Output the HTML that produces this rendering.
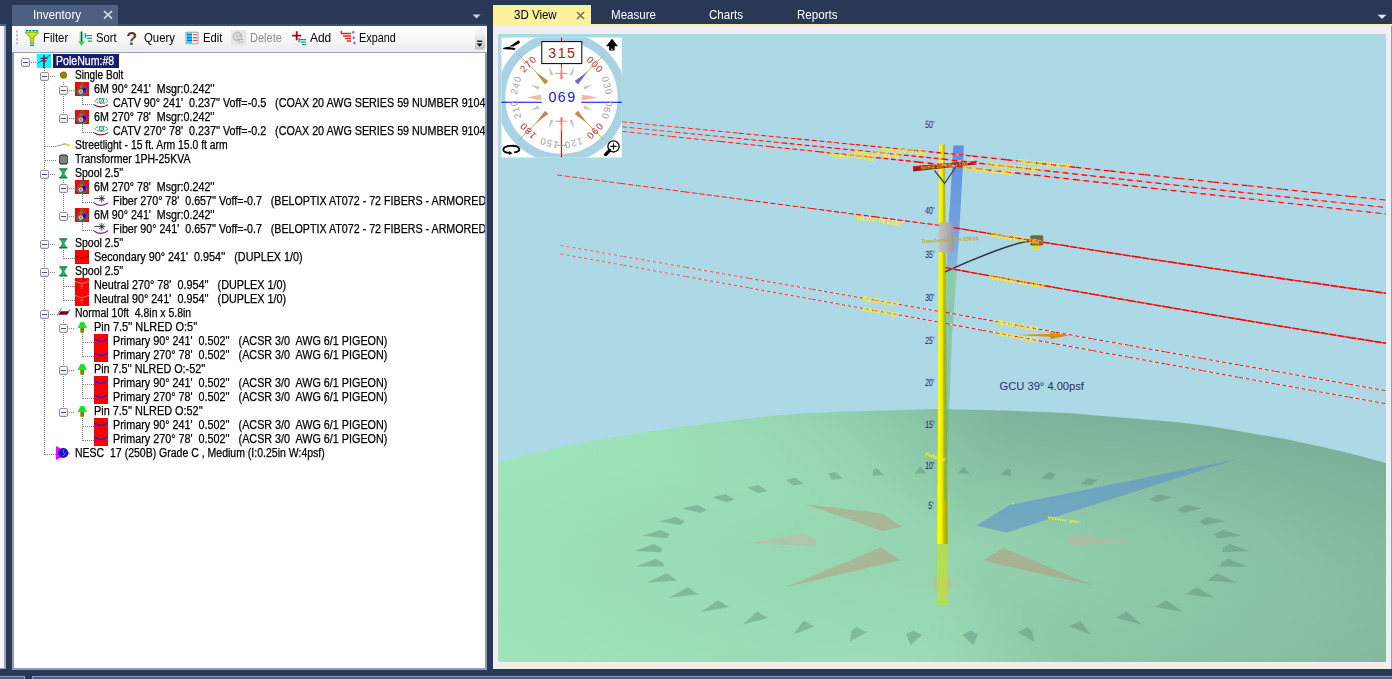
<!DOCTYPE html><html><head><meta charset="utf-8"><title>Inventory 3D View</title><style>
html,body{margin:0;padding:0}
body{width:1392px;height:679px;overflow:hidden;background:#293955;position:relative;font-family:"Liberation Sans",sans-serif}
.abs{position:absolute}
#lp{left:0;top:26px;width:4px;height:642px;background:#f5f5f8;border-right:2px solid #9aa6c4;border-bottom:1px solid #9aa6c4}
#lpt{left:0;top:24px;width:6px;height:2px;background:#4d6082}
#invtab{left:12px;top:5px;width:106px;height:21px;background:#4d6082;color:#fff;font-size:12px}
#invtab span{position:absolute;left:21px;top:3px;transform-origin:0 50%;transform:scaleX(0.975)}
#inv{left:12px;top:26px;width:475px;height:644px;background:#fff}
#tb{left:0;top:0;width:475px;height:26px;background:linear-gradient(#ffffff,#f6f6f6 55%,#ebebec);border-radius:0 0 3px 0}
#tbl{left:12px;top:24px;width:475px;height:2px;background:#3c4f76}
#tree{left:0;top:26px;width:471px;height:615px;border:2px solid #8e9bbc;border-top:1px solid #9aa3b5;background:#fff;overflow:hidden}
.tl{position:absolute;font-size:12px;color:#000;top:5px;white-space:nowrap}
.row{position:absolute;left:0;height:14px;white-space:nowrap;font-size:13px;line-height:14px;color:#000}
.t{position:absolute;display:inline-block;height:14px;line-height:14px;font-size:12px;color:#000;-webkit-text-stroke:0.25px currentColor;transform-origin:0 50%;transform:scaleX(0.89);white-space:pre}
#bot1{left:0;top:676px;width:24px;height:3px;background:#4d6082;border-top:1px solid #8e9bbc;border-right:1px solid #8e9bbc}
#bot2{left:32px;top:676px;width:1360px;height:3px;background:#4d6082;border-top:1px solid #8e9bbc;border-left:1px solid #8e9bbc}
#v3tab{left:493px;top:5px;width:98px;height:21px;background:#fff29d;color:#000;font-size:12px}
.ttab{position:absolute;top:8px;color:#fff;font-size:12px;transform-origin:0 50%;transform:scaleX(0.965)}
#yl{left:493px;top:24px;width:899px;height:2px;background:#fff29d}
#vp{left:493px;top:26px;width:898px;height:643px;background:#efeff2}
#vpr{left:1391px;top:26px;width:1px;height:643px;background:#8e9bbc}
#view{left:5px;top:8px;width:888px;height:628px;background:#add8e6;overflow:hidden}
</style></head><body><div id="tbl" class="abs"></div><div id="lpt" class="abs"></div><div id="lp" class="abs"></div><div id="invtab" class="abs"><span>Inventory</span><svg class="abs" style="left:90.5px;top:4.6px" width="10" height="10"><path d="M1 1L9 8.6M9 1L1 8.6" stroke="#d6dbe6" stroke-width="1.6" fill="none"/></svg></div><svg class="abs" style="left:472px;top:14px" width="10" height="6"><path d="M0.5 0.5H8.5L4.5 4.5Z" fill="#ced4e2"/></svg><svg class="abs" style="left:1377px;top:14px" width="10" height="6"><path d="M0.7 0.7H9.3L5 5Z" fill="#e4e8f0"/></svg><div id="inv" class="abs"><div id="tb" class="abs"><svg class="abs" style="left:0;top:0" width="475" height="26" viewBox="12 26 475 26"><rect x="16" y="30.4" width="2" height="2" fill="#b4b8c0"/><rect x="16" y="34.4" width="2" height="2" fill="#b4b8c0"/><rect x="16" y="38.4" width="2" height="2" fill="#b4b8c0"/><rect x="16" y="42.4" width="2" height="2" fill="#b4b8c0"/><path d="M25.8 30.8H28.2M29 30.8H31.4M32.4 30.8H34.8M35.6 30.8H38" stroke="#008080" stroke-width="1.4"/><path d="M25.3 32.3H38.5L33.6 38V43.6H30.4V38Z" fill="#e4e800" stroke="#58b020" stroke-width="0.8"/><path d="M28 33.5L32 38.5V43M36 33.5L32 38.5" stroke="#5a5ad0" stroke-width="0.7" stroke-dasharray="1 1" fill="none"/><path d="M30 45.2H34" stroke="#008080" stroke-width="1.2"/><path d="M81.5 31.5V44" stroke="#2a2ac8" stroke-width="1.1"/><path d="M80.2 31.5V41M82.8 31.5V41" stroke="#30e030" stroke-width="0.9"/><path d="M78.2 41.3H84.8L81.5 45.8Z" fill="#22e022"/><path d="M85.3 33V38.2M85.3 35.6H92M86.8 38.3H92M88 41.2H92" stroke="#1f9a8a" stroke-width="1.2" fill="none"/><rect x="186" y="32.2" width="12" height="11.6" fill="#fff" stroke="#8a8a8a" stroke-width="0.8"/><rect x="186.6" y="32.8" width="5.4" height="10.4" fill="#10e4f4"/><path d="M187 34.8H192M187 37.6H192M187 40.4H192" stroke="#2050e0" stroke-width="1.1"/><path d="M193 34.8H197.4M193 37.6H197.4M193 40.4H197.4" stroke="#f04040" stroke-width="1.1"/><rect x="231" y="30" width="15.5" height="15.5" fill="#e6e6e6"/><circle cx="237.5" cy="36.5" r="4.3" fill="#dcdcdc" stroke="#b4b4b4" stroke-width="1"/><path d="M236 36H241L240 33.5M236.5 39.5H243.5M238 42H243.5" stroke="#b0b0b0" stroke-width="0.9" fill="none"/><path d="M296.7 31.3V40.2M292.2 35.7H301.3" stroke="#b00020" stroke-width="1.8"/><path d="M299 38V42.2M299 39.6H306M300.6 42.2H306M302 44.7H306" stroke="#1f9a8a" stroke-width="1.2" fill="none"/><path d="M341.3 30.8V34M341 33.5H351M343 36H351M345 38.5H351M347 41H351" stroke="#f02020" stroke-width="1.3" fill="none"/><path d="M351.8 32.2H354.6M353.2 30.8V33.6M352.3 37.8H355.1M353.7 36.4V39.2M353 43H355.8M354.4 41.6V44.4" stroke="#4a4af0" stroke-width="0.8"/><defs><linearGradient id="ovg" x1="0" y1="0" x2="0" y2="1"><stop offset="0" stop-color="#fbfbfb"/><stop offset="0.35" stop-color="#f0f0f0"/><stop offset="0.7" stop-color="#d8d8d8"/><stop offset="1" stop-color="#bcbcbe"/></linearGradient></defs><path d="M475 27H485.4V47.4L483 49.6H475Z" fill="url(#ovg)"/><path d="M477 41.2H482.2" stroke="#000" stroke-width="1.2"/><path d="M476.8 43.4H482.4L479.6 46.8Z" fill="#000"/></svg><span class="abs" style="left:114.3px;top:3.5px;font:bold 18px 'Liberation Sans',sans-serif;line-height:18px;color:#3c2a44;background:linear-gradient(#5a1a2a,#5a5a20 45%,#1a6a6a 70%,#5a2a8a);-webkit-background-clip:text;background-clip:text;-webkit-text-fill-color:transparent">?</span><span class="tl" style="left:31.2px;color:#000;transform-origin:0 50%;transform:scaleX(0.9448)">Filter</span><span class="tl" style="left:83.5px;color:#000;transform-origin:0 50%;transform:scaleX(0.9402)">Sort</span><span class="tl" style="left:132.1px;color:#000;transform-origin:0 50%;transform:scaleX(0.9484)">Query</span><span class="tl" style="left:191.1px;color:#000;transform-origin:0 50%;transform:scaleX(0.9378)">Edit</span><span class="tl" style="left:238.4px;color:#8d8d8d;transform-origin:0 50%;transform:scaleX(0.9196)">Delete</span><span class="tl" style="left:297.8px;color:#000;transform-origin:0 50%;transform:scaleX(0.9925)">Add</span><span class="tl" style="left:347.2px;color:#000;transform-origin:0 50%;transform:scaleX(0.9017)">Expand</span></div><div id="tree" class="abs"><svg class="abs" style="left:0;top:0" width="471" height="614" viewBox="14 53 471 614" shape-rendering="crispEdges"><defs><linearGradient id="bxg" x1="0" y1="0" x2="0" y2="1"><stop offset="0.5" stop-color="#fff"/><stop offset="1" stop-color="#dcdcdc"/></linearGradient></defs><path d="M44.5 68.0 V454.5 M30.5 62.5 H37.0 M63.5 82.0 V118.5 M49.5 76.5 H56.0 M82.5 96.0 V104.5 M68.5 90.5 H75.0 M82.5 104.5 H94.0 M82.5 124.0 V132.5 M68.5 118.5 H75.0 M82.5 132.5 H94.0 M44.5 146.5 H56.0 M44.5 160.5 H56.0 M63.5 180.0 V216.5 M49.5 174.5 H56.0 M82.5 194.0 V202.5 M68.5 188.5 H75.0 M82.5 202.5 H94.0 M82.5 222.0 V230.5 M68.5 216.5 H75.0 M82.5 230.5 H94.0 M63.5 250.0 V258.5 M49.5 244.5 H56.0 M63.5 258.5 H75.0 M63.5 278.0 V300.5 M49.5 272.5 H56.0 M63.5 286.5 H75.0 M63.5 300.5 H75.0 M63.5 320.0 V412.5 M49.5 314.5 H56.0 M82.5 334.0 V356.5 M68.5 328.5 H75.0 M82.5 342.5 H94.0 M82.5 356.5 H94.0 M82.5 376.0 V398.5 M68.5 370.5 H75.0 M82.5 384.5 H94.0 M82.5 398.5 H94.0 M82.5 418.0 V440.5 M68.5 412.5 H75.0 M82.5 426.5 H94.0 M82.5 440.5 H94.0 M44.5 454.5 H56.0" stroke="#808080" stroke-width="1" stroke-dasharray="1 1" fill="none"/><rect x="21.0" y="58.0" width="8" height="8" rx="1.3" fill="url(#bxg)" stroke="#8f8f8f" stroke-width="1" transform="translate(0.5 0.5)" shape-rendering="auto"/><rect x="23.0" y="62.0" width="5" height="1" fill="#3a4c9a"/><rect x="40.0" y="72.0" width="8" height="8" rx="1.3" fill="url(#bxg)" stroke="#8f8f8f" stroke-width="1" transform="translate(0.5 0.5)" shape-rendering="auto"/><rect x="42.0" y="76.0" width="5" height="1" fill="#3a4c9a"/><rect x="59.0" y="86.0" width="8" height="8" rx="1.3" fill="url(#bxg)" stroke="#8f8f8f" stroke-width="1" transform="translate(0.5 0.5)" shape-rendering="auto"/><rect x="61.0" y="90.0" width="5" height="1" fill="#3a4c9a"/><rect x="59.0" y="114.0" width="8" height="8" rx="1.3" fill="url(#bxg)" stroke="#8f8f8f" stroke-width="1" transform="translate(0.5 0.5)" shape-rendering="auto"/><rect x="61.0" y="118.0" width="5" height="1" fill="#3a4c9a"/><rect x="40.0" y="170.0" width="8" height="8" rx="1.3" fill="url(#bxg)" stroke="#8f8f8f" stroke-width="1" transform="translate(0.5 0.5)" shape-rendering="auto"/><rect x="42.0" y="174.0" width="5" height="1" fill="#3a4c9a"/><rect x="59.0" y="184.0" width="8" height="8" rx="1.3" fill="url(#bxg)" stroke="#8f8f8f" stroke-width="1" transform="translate(0.5 0.5)" shape-rendering="auto"/><rect x="61.0" y="188.0" width="5" height="1" fill="#3a4c9a"/><rect x="59.0" y="212.0" width="8" height="8" rx="1.3" fill="url(#bxg)" stroke="#8f8f8f" stroke-width="1" transform="translate(0.5 0.5)" shape-rendering="auto"/><rect x="61.0" y="216.0" width="5" height="1" fill="#3a4c9a"/><rect x="40.0" y="240.0" width="8" height="8" rx="1.3" fill="url(#bxg)" stroke="#8f8f8f" stroke-width="1" transform="translate(0.5 0.5)" shape-rendering="auto"/><rect x="42.0" y="244.0" width="5" height="1" fill="#3a4c9a"/><rect x="40.0" y="268.0" width="8" height="8" rx="1.3" fill="url(#bxg)" stroke="#8f8f8f" stroke-width="1" transform="translate(0.5 0.5)" shape-rendering="auto"/><rect x="42.0" y="272.0" width="5" height="1" fill="#3a4c9a"/><rect x="40.0" y="310.0" width="8" height="8" rx="1.3" fill="url(#bxg)" stroke="#8f8f8f" stroke-width="1" transform="translate(0.5 0.5)" shape-rendering="auto"/><rect x="42.0" y="314.0" width="5" height="1" fill="#3a4c9a"/><rect x="59.0" y="324.0" width="8" height="8" rx="1.3" fill="url(#bxg)" stroke="#8f8f8f" stroke-width="1" transform="translate(0.5 0.5)" shape-rendering="auto"/><rect x="61.0" y="328.0" width="5" height="1" fill="#3a4c9a"/><rect x="59.0" y="366.0" width="8" height="8" rx="1.3" fill="url(#bxg)" stroke="#8f8f8f" stroke-width="1" transform="translate(0.5 0.5)" shape-rendering="auto"/><rect x="61.0" y="370.0" width="5" height="1" fill="#3a4c9a"/><rect x="59.0" y="408.0" width="8" height="8" rx="1.3" fill="url(#bxg)" stroke="#8f8f8f" stroke-width="1" transform="translate(0.5 0.5)" shape-rendering="auto"/><rect x="61.0" y="412.0" width="5" height="1" fill="#3a4c9a"/></svg><svg class="abs" style="left:23px;top:1px" width="14" height="14" viewBox="0 0 14 14"><rect width="14" height="14" fill="#00ffff"/><path d="M7 1V14" stroke="#8b1a1a" stroke-width="1.7"/><path d="M3.4 4.3H10.6M4.4 6.8H9.6" stroke="#8b1a1a" stroke-width="1.3"/><path d="M0.5 9.5L13.5 0.8" stroke="#2a3ad0" stroke-width="0.8"/></svg><svg class="abs" style="left:42px;top:15px" width="14" height="14" viewBox="0 0 14 14"><circle cx="7.5" cy="7.1" r="3.6" fill="#808000"/><path d="M6.2 5.8h1v1h-1zM8.6 5.8h1v1h-1zM7.4 7.6h1v1h-1zM5.4 8h0.8v0.8h-0.8z" fill="#a8a840"/></svg><svg class="abs" style="left:61px;top:29px" width="14" height="14" viewBox="0 0 14 14"><rect width="14" height="14" fill="#ff0000"/><path d="M7.1 1C6 1 5.6 2 5.4 3C4.4 5 1.9 8.4 2 10.4C2.1 11.8 4.6 12.6 7.1 13.4C9.6 12.6 12.1 11.8 12.2 10.4C12.3 8.4 9.8 5 8.8 3C8.6 2 8.2 1 7.1 1Z" fill="none" stroke="#0e8a80" stroke-width="1.3"/><circle cx="6.4" cy="4.8" r="1.6" fill="#7a8a10"/><circle cx="9.2" cy="7.8" r="2" fill="#0808f0"/><circle cx="5.8" cy="9.6" r="2.4" fill="#c4c4c4"/><circle cx="5.8" cy="9.6" r="1" fill="#2a9a90"/></svg><svg class="abs" style="left:80px;top:43px" width="14" height="14" viewBox="0 0 14 14"><ellipse cx="7.4" cy="4.9" rx="6.4" ry="2.4" fill="none" stroke="#1f9a3a" stroke-width="1" stroke-dasharray="2.2 1"/><circle cx="7.4" cy="4.9" r="2.3" fill="#d8ecf4" stroke="#1f8a7a" stroke-width="0.9"/><path d="M6 6L8.8 3.8M6.6 6.6L9.2 4.6" stroke="#5a8ac0" stroke-width="0.5"/><path d="M0.2 8.6C3.5 11.6 10.5 11.6 14 8.6" fill="none" stroke="#8b1a1a" stroke-width="1.2"/></svg><svg class="abs" style="left:61px;top:57px" width="14" height="14" viewBox="0 0 14 14"><rect width="14" height="14" fill="#ff0000"/><path d="M7.1 1C6 1 5.6 2 5.4 3C4.4 5 1.9 8.4 2 10.4C2.1 11.8 4.6 12.6 7.1 13.4C9.6 12.6 12.1 11.8 12.2 10.4C12.3 8.4 9.8 5 8.8 3C8.6 2 8.2 1 7.1 1Z" fill="none" stroke="#0e8a80" stroke-width="1.3"/><circle cx="6.4" cy="4.8" r="1.6" fill="#7a8a10"/><circle cx="9.2" cy="7.8" r="2" fill="#0808f0"/><circle cx="5.8" cy="9.6" r="2.4" fill="#c4c4c4"/><circle cx="5.8" cy="9.6" r="1" fill="#2a9a90"/></svg><svg class="abs" style="left:80px;top:71px" width="14" height="14" viewBox="0 0 14 14"><ellipse cx="7.4" cy="4.9" rx="6.4" ry="2.4" fill="none" stroke="#1f9a3a" stroke-width="1" stroke-dasharray="2.2 1"/><circle cx="7.4" cy="4.9" r="2.3" fill="#d8ecf4" stroke="#1f8a7a" stroke-width="0.9"/><path d="M6 6L8.8 3.8M6.6 6.6L9.2 4.6" stroke="#5a8ac0" stroke-width="0.5"/><path d="M0.2 8.6C3.5 11.6 10.5 11.6 14 8.6" fill="none" stroke="#8b1a1a" stroke-width="1.2"/></svg><svg class="abs" style="left:42px;top:85px" width="14" height="14" viewBox="0 0 14 14"><path d="M0.5 8.2L7 6.6L9.5 5.6" stroke="#9a9a9a" stroke-width="1.1" fill="none"/><path d="M7 6.3H11" stroke="#b0b0b0" stroke-width="1"/><rect x="10.4" y="6" width="3.4" height="2.6" rx="0.8" fill="#eaea10"/></svg><svg class="abs" style="left:42px;top:99px" width="14" height="14" viewBox="0 0 14 14"><rect x="3.2" y="2.4" width="8.6" height="10.2" rx="2.2" fill="#1a1a1a"/><rect x="4" y="3.6" width="7" height="7.8" rx="1" fill="#808080"/></svg><svg class="abs" style="left:42px;top:113px" width="14" height="14" viewBox="0 0 14 14"><path d="M3.6 3H11L8.3 7.4L11 11.6H3.6L6.3 7.4Z" fill="#18a848"/><path d="M6.3 4.2H8.4L7.4 6.4ZM6 10.6H8.8L7.4 8.4Z" fill="#30c0b0"/><path d="M3.2 2.9H11.4M3.2 11.7H11.4" stroke="#0e7a38" stroke-width="1.4"/></svg><svg class="abs" style="left:61px;top:127px" width="14" height="14" viewBox="0 0 14 14"><rect width="14" height="14" fill="#ff0000"/><path d="M7.1 1C6 1 5.6 2 5.4 3C4.4 5 1.9 8.4 2 10.4C2.1 11.8 4.6 12.6 7.1 13.4C9.6 12.6 12.1 11.8 12.2 10.4C12.3 8.4 9.8 5 8.8 3C8.6 2 8.2 1 7.1 1Z" fill="none" stroke="#0e8a80" stroke-width="1.3"/><circle cx="6.4" cy="4.8" r="1.6" fill="#7a8a10"/><circle cx="9.2" cy="7.8" r="2" fill="#0808f0"/><circle cx="5.8" cy="9.6" r="2.4" fill="#c4c4c4"/><circle cx="5.8" cy="9.6" r="1" fill="#2a9a90"/></svg><svg class="abs" style="left:80px;top:141px" width="14" height="14" viewBox="0 0 14 14"><path d="M0.2 4.6H11.3M7.8 1V8.4M5.2 2L10.4 7.2M10.4 2L5.2 7.2" stroke="#111" stroke-width="0.8" fill="none"/><path d="M0.2 8.8C3.5 12.2 10.5 12.2 14 8.8" fill="none" stroke="#9020a0" stroke-width="1.2"/></svg><svg class="abs" style="left:61px;top:155px" width="14" height="14" viewBox="0 0 14 14"><rect width="14" height="14" fill="#ff0000"/><path d="M7.1 1C6 1 5.6 2 5.4 3C4.4 5 1.9 8.4 2 10.4C2.1 11.8 4.6 12.6 7.1 13.4C9.6 12.6 12.1 11.8 12.2 10.4C12.3 8.4 9.8 5 8.8 3C8.6 2 8.2 1 7.1 1Z" fill="none" stroke="#0e8a80" stroke-width="1.3"/><circle cx="6.4" cy="4.8" r="1.6" fill="#7a8a10"/><circle cx="9.2" cy="7.8" r="2" fill="#0808f0"/><circle cx="5.8" cy="9.6" r="2.4" fill="#c4c4c4"/><circle cx="5.8" cy="9.6" r="1" fill="#2a9a90"/></svg><svg class="abs" style="left:80px;top:169px" width="14" height="14" viewBox="0 0 14 14"><path d="M0.2 4.6H11.3M7.8 1V8.4M5.2 2L10.4 7.2M10.4 2L5.2 7.2" stroke="#111" stroke-width="0.8" fill="none"/><path d="M0.2 8.8C3.5 12.2 10.5 12.2 14 8.8" fill="none" stroke="#9020a0" stroke-width="1.2"/></svg><svg class="abs" style="left:42px;top:183px" width="14" height="14" viewBox="0 0 14 14"><path d="M3.6 3H11L8.3 7.4L11 11.6H3.6L6.3 7.4Z" fill="#18a848"/><path d="M6.3 4.2H8.4L7.4 6.4ZM6 10.6H8.8L7.4 8.4Z" fill="#30c0b0"/><path d="M3.2 2.9H11.4M3.2 11.7H11.4" stroke="#0e7a38" stroke-width="1.4"/></svg><svg class="abs" style="left:61px;top:197px" width="14" height="14" viewBox="0 0 14 14"><rect width="14" height="14" fill="#ff0000"/><path d="M0 5.8C4 8.6 10 8.6 14 5.8" fill="none" stroke="#a00000" stroke-width="1.2"/></svg><svg class="abs" style="left:42px;top:211px" width="14" height="14" viewBox="0 0 14 14"><path d="M3.6 3H11L8.3 7.4L11 11.6H3.6L6.3 7.4Z" fill="#18a848"/><path d="M6.3 4.2H8.4L7.4 6.4ZM6 10.6H8.8L7.4 8.4Z" fill="#30c0b0"/><path d="M3.2 2.9H11.4M3.2 11.7H11.4" stroke="#0e7a38" stroke-width="1.4"/></svg><svg class="abs" style="left:61px;top:225px" width="14" height="14" viewBox="0 0 14 14"><rect width="14" height="14" fill="#ff0000"/><path d="M0 3.4C3 4.2 5 5.4 6.6 5.6C8.5 5.4 11 4.2 14 3.4" fill="none" stroke="#b89080" stroke-width="0.9"/><path d="M6.6 5.6V8.2M4.6 8.2H8.6M5.6 10.2H7.6" fill="none" stroke="#d07060" stroke-width="0.8"/></svg><svg class="abs" style="left:61px;top:239px" width="14" height="14" viewBox="0 0 14 14"><rect width="14" height="14" fill="#ff0000"/><path d="M0 3.4C3 4.2 5 5.4 6.6 5.6C8.5 5.4 11 4.2 14 3.4" fill="none" stroke="#b89080" stroke-width="0.9"/><path d="M6.6 5.6V8.2M4.6 8.2H8.6M5.6 10.2H7.6" fill="none" stroke="#d07060" stroke-width="0.8"/></svg><svg class="abs" style="left:42px;top:253px" width="14" height="14" viewBox="0 0 14 14"><path d="M2.4 8.8L4.6 5.2H13L11 8.8Z" fill="#800000"/><path d="M1 9.6L5.5 2.4M10.8 8.8L14 3.3" stroke="#3030d0" stroke-width="0.8"/></svg><svg class="abs" style="left:61px;top:267px" width="14" height="14" viewBox="0 0 14 14"><path d="M5.6 2.1H9L12 7.9H2.6Z" fill="#10f010"/><path d="M6 4.4H8.6" stroke="#3a8ad0" stroke-width="0.7"/><rect x="5.3" y="7.9" width="3.7" height="4.9" fill="#808000"/></svg><svg class="abs" style="left:80px;top:281px" width="14" height="14" viewBox="0 0 14 14"><rect width="14" height="14" fill="#ff0000"/><path d="M0 5C3.5 7 5.5 7.6 7 7.6S10.5 7 14 5" fill="none" stroke="#2222e0" stroke-width="1.5"/></svg><svg class="abs" style="left:80px;top:295px" width="14" height="14" viewBox="0 0 14 14"><rect width="14" height="14" fill="#ff0000"/><path d="M0 5C3.5 7 5.5 7.6 7 7.6S10.5 7 14 5" fill="none" stroke="#2222e0" stroke-width="1.5"/></svg><svg class="abs" style="left:61px;top:309px" width="14" height="14" viewBox="0 0 14 14"><path d="M5.6 2.1H9L12 7.9H2.6Z" fill="#10f010"/><path d="M6 4.4H8.6" stroke="#3a8ad0" stroke-width="0.7"/><rect x="5.3" y="7.9" width="3.7" height="4.9" fill="#808000"/></svg><svg class="abs" style="left:80px;top:323px" width="14" height="14" viewBox="0 0 14 14"><rect width="14" height="14" fill="#ff0000"/><path d="M0 5C3.5 7 5.5 7.6 7 7.6S10.5 7 14 5" fill="none" stroke="#2222e0" stroke-width="1.5"/></svg><svg class="abs" style="left:80px;top:337px" width="14" height="14" viewBox="0 0 14 14"><rect width="14" height="14" fill="#ff0000"/><path d="M0 5C3.5 7 5.5 7.6 7 7.6S10.5 7 14 5" fill="none" stroke="#2222e0" stroke-width="1.5"/></svg><svg class="abs" style="left:61px;top:351px" width="14" height="14" viewBox="0 0 14 14"><path d="M5.6 2.1H9L12 7.9H2.6Z" fill="#10f010"/><path d="M6 4.4H8.6" stroke="#3a8ad0" stroke-width="0.7"/><rect x="5.3" y="7.9" width="3.7" height="4.9" fill="#808000"/></svg><svg class="abs" style="left:80px;top:365px" width="14" height="14" viewBox="0 0 14 14"><rect width="14" height="14" fill="#ff0000"/><path d="M0 5C3.5 7 5.5 7.6 7 7.6S10.5 7 14 5" fill="none" stroke="#2222e0" stroke-width="1.5"/></svg><svg class="abs" style="left:80px;top:379px" width="14" height="14" viewBox="0 0 14 14"><rect width="14" height="14" fill="#ff0000"/><path d="M0 5C3.5 7 5.5 7.6 7 7.6S10.5 7 14 5" fill="none" stroke="#2222e0" stroke-width="1.5"/></svg><svg class="abs" style="left:42px;top:393px" width="14" height="14" viewBox="0 0 14 14"><path d="M0 0L14 7.3L0 14Z" fill="#ff00ff"/><circle cx="7.3" cy="7" r="5" fill="#1414e8"/><path d="M8 4.2C6.6 4.8 6.8 6 8 6.8S9 9 7.2 9.8" fill="none" stroke="#e0d020" stroke-width="0.8" stroke-dasharray="1.2 0.8"/></svg><div class="abs" style="left:39px;top:1px;width:66px;height:14px;background:#1b1b70"></div><span class="t" style="left:42.4px;top:1px;color:#fff;transform:scaleX(0.8821)">PoleNum:#8</span><span class="t" style="left:61.4px;top:15px;transform:scaleX(0.8426)">Single Bolt</span><span class="t" style="left:80.4px;top:29px;transform:scaleX(0.8915)">6M 90° 241'  Msgr:0.242''</span><span class="t" style="left:99.4px;top:43px;transform:scaleX(0.8956)">CATV 90° 241'  0.237'' Voff=-0.5   (COAX 20 AWG SERIES 59 NUMBER 9104</span><span class="t" style="left:80.4px;top:57px;transform:scaleX(0.8915)">6M 270° 78'  Msgr:0.242''</span><span class="t" style="left:99.4px;top:71px;transform:scaleX(0.8956)">CATV 270° 78'  0.237'' Voff=-0.2   (COAX 20 AWG SERIES 59 NUMBER 9104</span><span class="t" style="left:61.4px;top:85px;transform:scaleX(0.8637)">Streetlight - 15 ft. Arm 15.0 ft arm</span><span class="t" style="left:61.4px;top:99px;transform:scaleX(0.8740)">Transformer 1PH-25KVA</span><span class="t" style="left:61.4px;top:113px;transform:scaleX(0.8742)">Spool 2.5''</span><span class="t" style="left:80.4px;top:127px;transform:scaleX(0.8915)">6M 270° 78'  Msgr:0.242''</span><span class="t" style="left:99.4px;top:141px;transform:scaleX(0.8903)">Fiber 270° 78'  0.657'' Voff=-0.7   (BELOPTIX AT072 - 72 FIBERS - ARMORED</span><span class="t" style="left:80.4px;top:155px;transform:scaleX(0.8915)">6M 90° 241'  Msgr:0.242''</span><span class="t" style="left:99.4px;top:169px;transform:scaleX(0.8903)">Fiber 90° 241'  0.657'' Voff=-0.7   (BELOPTIX AT072 - 72 FIBERS - ARMORED</span><span class="t" style="left:61.4px;top:183px;transform:scaleX(0.8742)">Spool 2.5''</span><span class="t" style="left:80.4px;top:197px;transform:scaleX(0.9003)">Secondary 90° 241'  0.954''   (DUPLEX 1/0)</span><span class="t" style="left:61.4px;top:211px;transform:scaleX(0.8742)">Spool 2.5''</span><span class="t" style="left:80.4px;top:225px;transform:scaleX(0.9017)">Neutral 270° 78'  0.954''   (DUPLEX 1/0)</span><span class="t" style="left:80.4px;top:239px;transform:scaleX(0.9017)">Neutral 90° 241'  0.954''   (DUPLEX 1/0)</span><span class="t" style="left:61.4px;top:253px;transform:scaleX(0.8705)">Normal 10ft  4.8in x 5.8in</span><span class="t" style="left:80.4px;top:267px;transform:scaleX(0.9133)">Pin 7.5'' NLRED O:5''</span><span class="t" style="left:99.4px;top:281px;transform:scaleX(0.8986)">Primary 90° 241'  0.502''   (ACSR 3/0  AWG 6/1 PIGEON)</span><span class="t" style="left:99.4px;top:295px;transform:scaleX(0.8986)">Primary 270° 78'  0.502''   (ACSR 3/0  AWG 6/1 PIGEON)</span><span class="t" style="left:80.4px;top:309px;transform:scaleX(0.8986)">Pin 7.5'' NLRED O:-52''</span><span class="t" style="left:99.4px;top:323px;transform:scaleX(0.8986)">Primary 90° 241'  0.502''   (ACSR 3/0  AWG 6/1 PIGEON)</span><span class="t" style="left:99.4px;top:337px;transform:scaleX(0.8986)">Primary 270° 78'  0.502''   (ACSR 3/0  AWG 6/1 PIGEON)</span><span class="t" style="left:80.4px;top:351px;transform:scaleX(0.9076)">Pin 7.5'' NLRED O:52''</span><span class="t" style="left:99.4px;top:365px;transform:scaleX(0.8986)">Primary 90° 241'  0.502''   (ACSR 3/0  AWG 6/1 PIGEON)</span><span class="t" style="left:99.4px;top:379px;transform:scaleX(0.8986)">Primary 270° 78'  0.502''   (ACSR 3/0  AWG 6/1 PIGEON)</span><span class="t" style="left:61.4px;top:393px;transform:scaleX(0.8756)">NESC  17 (250B) Grade C , Medium (I:0.25in W:4psf)</span></div></div><div id="bot1" class="abs"></div><div id="bot2" class="abs"></div><div id="v3tab" class="abs"><span class="abs" style="left:20.5px;top:3px;transform-origin:0 50%;transform:scaleX(0.96)">3D View</span><svg class="abs" style="left:83px;top:6px" width="10" height="10"><path d="M1 1L8 8M8 1L1 8" stroke="#7d7850" stroke-width="1.7" fill="none"/></svg></div><span class="ttab" style="left:611px">Measure</span><span class="ttab" style="left:709px">Charts</span><span class="ttab" style="left:797px">Reports</span><div id="yl" class="abs"></div><div id="vp" class="abs"><div id="view" class="abs"><div class="abs" style="left:0;top:0;width:888px;height:628px;background:conic-gradient(from 0deg at 445px 509px,#86bea2 0.0deg,#7fb39b 28.0deg,#7db099 52.4deg,#7cae98 85.0deg,#84baa0 130.0deg,#9ce1b8 176.0deg,#9fe5bb 195.0deg,#a1e8bd 258.0deg,#9ee4ba 284.0deg,#95d5b1 310.0deg,#86bea2 360.0deg);clip-path:path('M-10.0 431.0 C-8.3 430.5 -9.5 430.6 0.2 428.2 C9.9 425.8 31.6 420.0 48.4 416.3 C65.2 412.6 83.4 409.0 100.9 405.8 C118.4 402.6 135.8 400.0 153.3 397.4 C170.8 394.8 188.3 392.3 205.8 390.0 C223.3 387.7 244.5 385.4 258.2 383.8 C271.9 382.2 272.2 381.8 288.0 380.7 C303.8 379.6 330.3 378.2 353.0 377.3 C375.7 376.4 408.7 375.8 424.0 375.4 C439.3 375.0 433.1 375.1 445.0 375.2 C456.9 375.3 475.1 375.6 495.4 376.2 C515.6 376.8 548.7 378.1 566.5 379.0 C584.3 379.9 582.1 380.0 602.0 381.7 C621.9 383.4 661.4 386.2 685.9 389.0 C710.4 391.8 729.6 395.2 748.8 398.4 C768.0 401.5 785.6 404.8 801.3 407.9 C817.0 411.0 828.9 413.8 843.2 417.3 C857.5 420.8 878.3 426.5 887.3 428.9 C896.3 431.3 895.4 431.1 897.0 431.5 L897 636 L-10 636 Z')"></div><svg class="abs" style="left:0;top:0" width="888" height="628" viewBox="498 34 888 628"><defs><linearGradient id="gg" gradientUnits="userSpaceOnUse" x1="497" y1="0" x2="1386" y2="0"><stop offset="0" stop-color="#9de2b9"/><stop offset="0.35" stop-color="#98dbb4"/><stop offset="0.6" stop-color="#8ccaa8"/><stop offset="1" stop-color="#83b89e"/></linearGradient><radialGradient id="gd" gradientUnits="userSpaceOnUse" cx="1260" cy="400" r="400" gradientTransform="translate(1260 400) scale(1 0.3) translate(-1260 -400)"><stop offset="0" stop-color="#6f9f8c" stop-opacity="0.55"/><stop offset="1" stop-color="#6f9f8c" stop-opacity="0"/></radialGradient><linearGradient id="pg" x1="0" y1="0" x2="1" y2="0"><stop offset="0" stop-color="#f2f200"/><stop offset="0.2" stop-color="#ffff00"/><stop offset="0.48" stop-color="#ecec00"/><stop offset="0.62" stop-color="#c2c200"/><stop offset="1" stop-color="#9ea200"/></linearGradient><linearGradient id="sg" gradientUnits="userSpaceOnUse" x1="0" y1="145" x2="0" y2="470"><stop offset="0" stop-color="#4f83e0" stop-opacity="0.85"/><stop offset="0.25" stop-color="#6394dc" stop-opacity="0.8"/><stop offset="0.36" stop-color="#78a8dc" stop-opacity="0.75"/><stop offset="0.4" stop-color="#80cc98" stop-opacity="0.75"/><stop offset="0.6" stop-color="#70b070" stop-opacity="0.5"/><stop offset="1" stop-color="#70b070" stop-opacity="0.5"/></linearGradient><radialGradient id="g0" gradientUnits="userSpaceOnUse" cx="943" cy="600" r="644" fx="943" fy="405.8" gradientTransform="translate(943 600) scale(1 0.2935) translate(-943 -600)"><stop offset="0" stop-color="#94d4b0" stop-opacity="1"/><stop offset="1" stop-color="#94d4b0" stop-opacity="0"/></radialGradient></defs><path d="M488.0 465.0 C489.7 464.5 488.5 464.6 498.2 462.2 C507.9 459.8 529.6 454.0 546.4 450.3 C563.2 446.6 581.4 443.0 598.9 439.8 C616.4 436.6 633.8 434.0 651.3 431.4 C668.8 428.8 686.3 426.3 703.8 424.0 C721.3 421.7 742.5 419.4 756.2 417.8 C769.9 416.2 770.2 415.8 786.0 414.7 C801.8 413.6 828.3 412.2 851.0 411.3 C873.7 410.4 906.7 409.8 922.0 409.4 C937.3 409.0 931.1 409.1 943.0 409.2 C954.9 409.3 973.1 409.6 993.4 410.2 C1013.6 410.8 1046.7 412.1 1064.5 413.0 C1082.3 413.9 1080.1 414.0 1100.0 415.7 C1119.9 417.4 1159.4 420.2 1183.9 423.0 C1208.4 425.8 1227.6 429.2 1246.8 432.4 C1266.0 435.5 1283.6 438.8 1299.3 441.9 C1315.0 445.0 1326.9 447.8 1341.2 451.3 C1355.5 454.8 1376.3 460.5 1385.3 462.9 C1394.3 465.3 1393.4 465.1 1395.0 465.5 L1395 670 L488 670 Z" fill="url(#g0)"/><path d="M957.4 473.4 L963.8 466.5 L965.1 467.8 L969.3 473.7Z M999.8 475.0 L1007.1 468.4 L1010.9 469.8 L1011.4 475.8Z M1041.1 478.5 L1049.1 472.1 L1055.4 473.8 L1052.2 479.8Z M1080.3 483.8 L1088.9 477.7 L1097.7 479.7 L1090.8 485.6Z M1149.3 499.6 L1158.5 494.2 L1171.9 497.3 L1157.5 502.3Z M1177.1 509.9 L1186.4 504.8 L1201.7 508.6 L1183.8 513.0Z M1199.1 521.6 L1208.2 516.9 L1225.3 521.5 L1204.1 525.1Z M1214.4 534.5 L1223.1 530.1 L1241.6 535.7 L1217.4 538.2Z M1222.2 548.2 L1230.0 544.1 L1249.5 550.9 L1222.8 552.2Z M1219.7 566.5 L1221.5 562.5 L1228.2 558.7 L1248.1 566.6Z M1207.4 580.8 L1211.8 576.9 L1217.1 573.2 L1236.7 582.4Z M1185.8 594.5 L1196.3 587.3 L1214.9 597.8Z M1155.0 607.0 L1166.1 600.3 L1182.9 612.0Z M1115.8 617.8 L1127.0 611.6 L1141.1 624.4Z M1069.4 626.4 L1080.2 620.7 L1090.9 634.4Z M1017.5 632.2 L1027.5 627.1 L1032.4 630.9 L1034.1 641.4Z M962.3 635.0 L970.9 630.4 L977.8 634.5 L973.2 645.0Z M906.2 634.5 L913.1 630.4 L921.7 635.0 L910.8 645.0Z M849.9 641.4 L851.6 630.9 L856.5 627.1 L866.5 632.2Z M793.1 634.4 L803.8 620.7 L814.6 626.4Z M742.9 624.4 L757.0 611.6 L768.2 617.8Z M701.1 612.0 L717.9 600.3 L729.0 607.0Z M669.1 597.8 L687.7 587.3 L698.2 594.5Z M647.3 582.4 L666.9 573.2 L672.2 576.9 L676.6 580.8Z M635.9 566.6 L655.8 558.7 L662.5 562.5 L664.3 566.5Z M634.5 550.9 L654.0 544.1 L661.8 548.2 L661.2 552.2Z M642.4 535.7 L660.9 530.1 L669.6 534.5 L666.6 538.2Z M658.7 521.5 L675.8 516.9 L684.9 521.6 L679.9 525.1Z M682.3 508.6 L697.6 504.8 L706.9 509.9 L700.2 513.0Z M712.1 497.3 L725.5 494.2 L734.7 499.6 L726.5 502.3Z M747.1 487.6 L758.3 485.1 L767.3 490.9 L757.8 493.1Z M786.3 479.7 L795.1 477.7 L803.7 483.8 L793.2 485.6Z M828.6 473.8 L834.9 472.1 L842.9 478.5 L831.8 479.8Z M872.6 475.8 L873.1 469.8 L876.9 468.4 L884.2 475.0Z M914.7 473.7 L918.9 467.8 L920.2 466.5 L926.6 473.4Z" fill="#5f8a78" fill-opacity="0.42"/><g fill="#c08a70" fill-opacity="0.42"><polygon points="805.6,504.3 882.3,513.4 901.9,527 882.3,531.1"/><polygon points="785.8,587.2 880.6,547.6 900.4,560 893,562"/><polygon points="1092.6,585.2 1003.3,547.9 983.8,560.2 990,562.5"/></g><g fill="#d8a8a0" fill-opacity="0.38"><polygon points="746.5,543.2 804,533.8 816,540 816,546.2"/><polygon points="1134.8,542.3 1075,534.5 1068,540 1070,545.5"/><polygon points="942.5,597 932.5,584 935,576 950,576 952.5,584"/></g><polygon points="976.4,525.5 1006.6,532.6 1237,458.9 1009.8,505" fill="#5f93cf" fill-opacity="0.62"/><polygon points="939.2,144.5 944.8,144.5 947.7,544 937.1,544" fill="url(#pg)"/><polygon points="937.1,544 947.7,544 947.7,605 937.3,605" fill="#c8e418" fill-opacity="0.6"/><polygon points="953.3,145.4 963.9,145.4 961,200 959.8,223 955.4,290 951.8,340 949.6,400 948,450 946.5,500 944,500 944,340 945.3,290 948.7,223 950.2,200" fill="url(#sg)"/><path d="M934.5 170.5 L944.6 183.5 L955.7 167" fill="none" stroke="#36465a" stroke-width="1.3"/><g stroke="#ece4d4" stroke-width="1.6"><path d="M918.1 161.5V167"/><path d="M942.4 158.5V164"/><path d="M972.3 155.5V161.5"/></g><polygon points="913.1,166.3 976.7,160.8 976.7,164.6 913.1,171.6" fill="#a01c1c"/><polygon points="913.1,166.3 976.7,160.8 976.7,161.8 913.1,167.5" fill="#b82c2c"/><polygon points="951.2,163.2 962.6,162.2 962.4,165.9 950.9,167.2" fill="#2a2aa0" fill-opacity="0.45"/><defs><linearGradient id="tg" x1="0" y1="0" x2="1" y2="0"><stop offset="0" stop-color="#c4c4c4"/><stop offset="0.5" stop-color="#b2b2b2"/><stop offset="1" stop-color="#9a9a9c"/></linearGradient></defs><rect x="938.3" y="222.4" width="15.5" height="30" rx="3" ry="3" fill="url(#tg)"/><path d="M945.1 271.9 C960 265 985 254.5 1005 247.5 S1025 242 1032 241.4" fill="none" stroke="#303840" stroke-width="1.5"/><rect x="1033" y="244" width="6.6" height="5" fill="#e8e000"/><rect x="1030.2" y="235.3" width="13" height="10.2" rx="1.5" fill="#6e6a48"/><defs><linearGradient id="og" x1="0" y1="0" x2="0" y2="1"><stop offset="0" stop-color="#f0a010"/><stop offset="1" stop-color="#c87c08"/></linearGradient></defs><path d="M1017 335.1L1050.5 333.7L1049 331.8L1069.8 335.2L1050 339L1050.5 336.7Z" fill="url(#og)"/><g fill="none"><path d="M622.4 121.8 L680.7 127.5" stroke="#f4aab0" stroke-width="0.67" stroke-opacity="1.00"/><path d="M622.4 121.8 L680.7 127.5" stroke="#ff0000" stroke-width="0.67" stroke-dasharray="4.5 3" stroke-dashoffset="0.0"/><path d="M680.7 127.5 L739.0 133.2" stroke="#f4aab0" stroke-width="0.80" stroke-opacity="1.00"/><path d="M680.7 127.5 L739.0 133.2" stroke="#ff0000" stroke-width="0.80" stroke-dasharray="4.5 3" stroke-dashoffset="0.0"/><path d="M739.0 133.2 L797.3 138.9" stroke="#f4aab0" stroke-width="0.93" stroke-opacity="1.00"/><path d="M739.0 133.2 L797.3 138.9" stroke="#ff0000" stroke-width="0.93" stroke-dasharray="4.5 3" stroke-dashoffset="0.0"/><path d="M797.3 138.9 L855.7 144.6" stroke="#f4aab0" stroke-width="1.07" stroke-opacity="1.00"/><path d="M797.3 138.9 L855.7 144.6" stroke="#ff0000" stroke-width="1.07" stroke-dasharray="4.5 3" stroke-dashoffset="0.0"/><path d="M855.7 144.6 L914.0 150.3" stroke="#f4aab0" stroke-width="1.20" stroke-opacity="1.00"/><path d="M855.7 144.6 L914.0 150.3" stroke="#ff0000" stroke-width="1.20" stroke-dasharray="4.5 3" stroke-dashoffset="0.0"/><path d="M914.0 150.3 L972.3 156.0" stroke="#f4aab0" stroke-width="1.33" stroke-opacity="1.00"/><path d="M914.0 150.3 L972.3 156.0" stroke="#ff0000" stroke-width="1.33" stroke-dasharray="4.5 3" stroke-dashoffset="0.0"/><path d="M972.3 156.0 L1006.8 159.8" stroke="#f4aab0" stroke-width="1.39" stroke-opacity="1.00"/><path d="M972.3 156.0 L1006.8 159.8" stroke="#ff0000" stroke-width="1.39" stroke-dasharray="5.5 4" stroke-dashoffset="0.0"/><path d="M1006.8 159.8 L1041.2 163.5" stroke="#f4aab0" stroke-width="1.36" stroke-opacity="1.00"/><path d="M1006.8 159.8 L1041.2 163.5" stroke="#ff0000" stroke-width="1.36" stroke-dasharray="5.5 4" stroke-dashoffset="0.0"/><path d="M1041.2 163.5 L1075.7 167.3" stroke="#f4aab0" stroke-width="1.33" stroke-opacity="1.00"/><path d="M1041.2 163.5 L1075.7 167.3" stroke="#ff0000" stroke-width="1.33" stroke-dasharray="5.5 4" stroke-dashoffset="0.0"/><path d="M1075.7 167.3 L1110.2 171.0" stroke="#f4aab0" stroke-width="1.30" stroke-opacity="1.00"/><path d="M1075.7 167.3 L1110.2 171.0" stroke="#ff0000" stroke-width="1.30" stroke-dasharray="5.5 4" stroke-dashoffset="0.0"/><path d="M1110.2 171.0 L1144.7 174.7" stroke="#f4aab0" stroke-width="1.27" stroke-opacity="1.00"/><path d="M1110.2 171.0 L1144.7 174.7" stroke="#ff0000" stroke-width="1.27" stroke-dasharray="5.5 4" stroke-dashoffset="0.0"/><path d="M1144.7 174.7 L1179.1 178.4" stroke="#f4aab0" stroke-width="1.24" stroke-opacity="1.00"/><path d="M1144.7 174.7 L1179.1 178.4" stroke="#ff0000" stroke-width="1.24" stroke-dasharray="5.5 4" stroke-dashoffset="0.0"/><path d="M1179.1 178.4 L1213.6 182.1" stroke="#f4aab0" stroke-width="1.21" stroke-opacity="1.00"/><path d="M1179.1 178.4 L1213.6 182.1" stroke="#ff0000" stroke-width="1.21" stroke-dasharray="5.5 4" stroke-dashoffset="0.0"/><path d="M1213.6 182.1 L1248.1 185.7" stroke="#f4aab0" stroke-width="1.18" stroke-opacity="1.00"/><path d="M1213.6 182.1 L1248.1 185.7" stroke="#ff0000" stroke-width="1.18" stroke-dasharray="5.5 4" stroke-dashoffset="0.0"/><path d="M1248.1 185.7 L1282.6 189.3" stroke="#f4aab0" stroke-width="1.15" stroke-opacity="1.00"/><path d="M1248.1 185.7 L1282.6 189.3" stroke="#ff0000" stroke-width="1.15" stroke-dasharray="5.5 4" stroke-dashoffset="0.0"/><path d="M1282.6 189.3 L1317.0 192.9" stroke="#f4aab0" stroke-width="1.12" stroke-opacity="1.00"/><path d="M1282.6 189.3 L1317.0 192.9" stroke="#ff0000" stroke-width="1.12" stroke-dasharray="5.5 4" stroke-dashoffset="0.0"/><path d="M1317.0 192.9 L1351.5 196.5" stroke="#f4aab0" stroke-width="1.09" stroke-opacity="1.00"/><path d="M1317.0 192.9 L1351.5 196.5" stroke="#ff0000" stroke-width="1.09" stroke-dasharray="5.5 4" stroke-dashoffset="0.0"/><path d="M1351.5 196.5 L1386.0 200.1" stroke="#f4aab0" stroke-width="1.06" stroke-opacity="1.00"/><path d="M1351.5 196.5 L1386.0 200.1" stroke="#ff0000" stroke-width="1.06" stroke-dasharray="5.5 4" stroke-dashoffset="0.0"/><path d="M622.4 126.8 L675.7 132.2" stroke="#f4aab0" stroke-width="0.67" stroke-opacity="1.00"/><path d="M622.4 126.8 L675.7 132.2" stroke="#ff0000" stroke-width="0.67" stroke-dasharray="4.5 3" stroke-dashoffset="0.0"/><path d="M675.7 132.2 L729.1 137.5" stroke="#f4aab0" stroke-width="0.80" stroke-opacity="1.00"/><path d="M675.7 132.2 L729.1 137.5" stroke="#ff0000" stroke-width="0.80" stroke-dasharray="4.5 3" stroke-dashoffset="0.0"/><path d="M729.1 137.5 L782.4 142.9" stroke="#f4aab0" stroke-width="0.93" stroke-opacity="1.00"/><path d="M729.1 137.5 L782.4 142.9" stroke="#ff0000" stroke-width="0.93" stroke-dasharray="4.5 3" stroke-dashoffset="0.0"/><path d="M782.4 142.9 L835.7 148.3" stroke="#f4aab0" stroke-width="1.07" stroke-opacity="1.00"/><path d="M782.4 142.9 L835.7 148.3" stroke="#ff0000" stroke-width="1.07" stroke-dasharray="4.5 3" stroke-dashoffset="0.0"/><path d="M835.7 148.3 L889.1 153.6" stroke="#f4aab0" stroke-width="1.20" stroke-opacity="1.00"/><path d="M835.7 148.3 L889.1 153.6" stroke="#ff0000" stroke-width="1.20" stroke-dasharray="4.5 3" stroke-dashoffset="0.0"/><path d="M889.1 153.6 L942.4 159.0" stroke="#f4aab0" stroke-width="1.33" stroke-opacity="1.00"/><path d="M889.1 153.6 L942.4 159.0" stroke="#ff0000" stroke-width="1.33" stroke-dasharray="4.5 3" stroke-dashoffset="0.0"/><path d="M942.4 159.0 L979.4 163.2" stroke="#f4aab0" stroke-width="1.39" stroke-opacity="1.00"/><path d="M942.4 159.0 L979.4 163.2" stroke="#ff0000" stroke-width="1.39" stroke-dasharray="5.5 4" stroke-dashoffset="0.0"/><path d="M979.4 163.2 L1016.3 167.4" stroke="#f4aab0" stroke-width="1.36" stroke-opacity="1.00"/><path d="M979.4 163.2 L1016.3 167.4" stroke="#ff0000" stroke-width="1.36" stroke-dasharray="5.5 4" stroke-dashoffset="0.0"/><path d="M1016.3 167.4 L1053.3 171.6" stroke="#f4aab0" stroke-width="1.33" stroke-opacity="1.00"/><path d="M1016.3 167.4 L1053.3 171.6" stroke="#ff0000" stroke-width="1.33" stroke-dasharray="5.5 4" stroke-dashoffset="0.0"/><path d="M1053.3 171.6 L1090.3 175.7" stroke="#f4aab0" stroke-width="1.30" stroke-opacity="1.00"/><path d="M1053.3 171.6 L1090.3 175.7" stroke="#ff0000" stroke-width="1.30" stroke-dasharray="5.5 4" stroke-dashoffset="0.0"/><path d="M1090.3 175.7 L1127.2 179.8" stroke="#f4aab0" stroke-width="1.27" stroke-opacity="1.00"/><path d="M1090.3 175.7 L1127.2 179.8" stroke="#ff0000" stroke-width="1.27" stroke-dasharray="5.5 4" stroke-dashoffset="0.0"/><path d="M1127.2 179.8 L1164.2 183.9" stroke="#f4aab0" stroke-width="1.24" stroke-opacity="1.00"/><path d="M1127.2 179.8 L1164.2 183.9" stroke="#ff0000" stroke-width="1.24" stroke-dasharray="5.5 4" stroke-dashoffset="0.0"/><path d="M1164.2 183.9 L1201.2 187.9" stroke="#f4aab0" stroke-width="1.21" stroke-opacity="1.00"/><path d="M1164.2 183.9 L1201.2 187.9" stroke="#ff0000" stroke-width="1.21" stroke-dasharray="5.5 4" stroke-dashoffset="0.0"/><path d="M1201.2 187.9 L1238.1 191.9" stroke="#f4aab0" stroke-width="1.18" stroke-opacity="1.00"/><path d="M1201.2 187.9 L1238.1 191.9" stroke="#ff0000" stroke-width="1.18" stroke-dasharray="5.5 4" stroke-dashoffset="0.0"/><path d="M1238.1 191.9 L1275.1 195.8" stroke="#f4aab0" stroke-width="1.15" stroke-opacity="1.00"/><path d="M1238.1 191.9 L1275.1 195.8" stroke="#ff0000" stroke-width="1.15" stroke-dasharray="5.5 4" stroke-dashoffset="0.0"/><path d="M1275.1 195.8 L1312.1 199.8" stroke="#f4aab0" stroke-width="1.12" stroke-opacity="1.00"/><path d="M1275.1 195.8 L1312.1 199.8" stroke="#ff0000" stroke-width="1.12" stroke-dasharray="5.5 4" stroke-dashoffset="0.0"/><path d="M1312.1 199.8 L1349.0 203.6" stroke="#f4aab0" stroke-width="1.09" stroke-opacity="1.00"/><path d="M1312.1 199.8 L1349.0 203.6" stroke="#ff0000" stroke-width="1.09" stroke-dasharray="5.5 4" stroke-dashoffset="0.0"/><path d="M1349.0 203.6 L1386.0 207.5" stroke="#f4aab0" stroke-width="1.06" stroke-opacity="1.00"/><path d="M1349.0 203.6 L1386.0 207.5" stroke="#ff0000" stroke-width="1.06" stroke-dasharray="5.5 4" stroke-dashoffset="0.0"/><path d="M622.4 131.4 L671.7 136.5" stroke="#f4aab0" stroke-width="0.67" stroke-opacity="1.00"/><path d="M622.4 131.4 L671.7 136.5" stroke="#ff0000" stroke-width="0.67" stroke-dasharray="4.5 3" stroke-dashoffset="0.0"/><path d="M671.7 136.5 L721.0 141.6" stroke="#f4aab0" stroke-width="0.80" stroke-opacity="1.00"/><path d="M671.7 136.5 L721.0 141.6" stroke="#ff0000" stroke-width="0.80" stroke-dasharray="4.5 3" stroke-dashoffset="0.0"/><path d="M721.0 141.6 L770.2 146.7" stroke="#f4aab0" stroke-width="0.93" stroke-opacity="1.00"/><path d="M721.0 141.6 L770.2 146.7" stroke="#ff0000" stroke-width="0.93" stroke-dasharray="4.5 3" stroke-dashoffset="0.0"/><path d="M770.2 146.7 L819.5 151.8" stroke="#f4aab0" stroke-width="1.07" stroke-opacity="1.00"/><path d="M770.2 146.7 L819.5 151.8" stroke="#ff0000" stroke-width="1.07" stroke-dasharray="4.5 3" stroke-dashoffset="0.0"/><path d="M819.5 151.8 L868.8 156.9" stroke="#f4aab0" stroke-width="1.20" stroke-opacity="1.00"/><path d="M819.5 151.8 L868.8 156.9" stroke="#ff0000" stroke-width="1.20" stroke-dasharray="4.5 3" stroke-dashoffset="0.0"/><path d="M868.8 156.9 L918.1 162.0" stroke="#f4aab0" stroke-width="1.33" stroke-opacity="1.00"/><path d="M868.8 156.9 L918.1 162.0" stroke="#ff0000" stroke-width="1.33" stroke-dasharray="4.5 3" stroke-dashoffset="0.0"/><path d="M918.1 162.0 L957.1 166.4" stroke="#f4aab0" stroke-width="1.39" stroke-opacity="1.00"/><path d="M918.1 162.0 L957.1 166.4" stroke="#ff0000" stroke-width="1.39" stroke-dasharray="5.5 4" stroke-dashoffset="0.0"/><path d="M957.1 166.4 L996.1 170.8" stroke="#f4aab0" stroke-width="1.36" stroke-opacity="1.00"/><path d="M957.1 166.4 L996.1 170.8" stroke="#ff0000" stroke-width="1.36" stroke-dasharray="5.5 4" stroke-dashoffset="0.0"/><path d="M996.1 170.8 L1035.1 175.1" stroke="#f4aab0" stroke-width="1.33" stroke-opacity="1.00"/><path d="M996.1 170.8 L1035.1 175.1" stroke="#ff0000" stroke-width="1.33" stroke-dasharray="5.5 4" stroke-dashoffset="0.0"/><path d="M1035.1 175.1 L1074.1 179.5" stroke="#f4aab0" stroke-width="1.30" stroke-opacity="1.00"/><path d="M1035.1 175.1 L1074.1 179.5" stroke="#ff0000" stroke-width="1.30" stroke-dasharray="5.5 4" stroke-dashoffset="0.0"/><path d="M1074.1 179.5 L1113.1 183.9" stroke="#f4aab0" stroke-width="1.27" stroke-opacity="1.00"/><path d="M1074.1 179.5 L1113.1 183.9" stroke="#ff0000" stroke-width="1.27" stroke-dasharray="5.5 4" stroke-dashoffset="0.0"/><path d="M1113.1 183.9 L1152.0 188.2" stroke="#f4aab0" stroke-width="1.24" stroke-opacity="1.00"/><path d="M1113.1 183.9 L1152.0 188.2" stroke="#ff0000" stroke-width="1.24" stroke-dasharray="5.5 4" stroke-dashoffset="0.0"/><path d="M1152.0 188.2 L1191.0 192.5" stroke="#f4aab0" stroke-width="1.21" stroke-opacity="1.00"/><path d="M1152.0 188.2 L1191.0 192.5" stroke="#ff0000" stroke-width="1.21" stroke-dasharray="5.5 4" stroke-dashoffset="0.0"/><path d="M1191.0 192.5 L1230.0 196.8" stroke="#f4aab0" stroke-width="1.18" stroke-opacity="1.00"/><path d="M1191.0 192.5 L1230.0 196.8" stroke="#ff0000" stroke-width="1.18" stroke-dasharray="5.5 4" stroke-dashoffset="0.0"/><path d="M1230.0 196.8 L1269.0 201.1" stroke="#f4aab0" stroke-width="1.15" stroke-opacity="1.00"/><path d="M1230.0 196.8 L1269.0 201.1" stroke="#ff0000" stroke-width="1.15" stroke-dasharray="5.5 4" stroke-dashoffset="0.0"/><path d="M1269.0 201.1 L1308.0 205.4" stroke="#f4aab0" stroke-width="1.12" stroke-opacity="1.00"/><path d="M1269.0 201.1 L1308.0 205.4" stroke="#ff0000" stroke-width="1.12" stroke-dasharray="5.5 4" stroke-dashoffset="0.0"/><path d="M1308.0 205.4 L1347.0 209.7" stroke="#f4aab0" stroke-width="1.09" stroke-opacity="1.00"/><path d="M1308.0 205.4 L1347.0 209.7" stroke="#ff0000" stroke-width="1.09" stroke-dasharray="5.5 4" stroke-dashoffset="0.0"/><path d="M1347.0 209.7 L1386.0 214.0" stroke="#f4aab0" stroke-width="1.06" stroke-opacity="1.00"/><path d="M1347.0 209.7 L1386.0 214.0" stroke="#ff0000" stroke-width="1.06" stroke-dasharray="5.5 4" stroke-dashoffset="0.0"/><path d="M557.3 175.0 L620.9 183.4" stroke="#f4b8b8" stroke-width="0.70" stroke-opacity="1.00"/><path d="M557.3 175.0 L620.9 183.4" stroke="#f80000" stroke-width="0.70" stroke-dasharray="5 2.5" stroke-dashoffset="0.0"/><path d="M620.9 183.4 L684.5 191.8" stroke="#f4b8b8" stroke-width="0.79" stroke-opacity="1.00"/><path d="M620.9 183.4 L684.5 191.8" stroke="#f80000" stroke-width="0.79" stroke-dasharray="5 2.5" stroke-dashoffset="0.0"/><path d="M684.5 191.8 L748.1 200.2" stroke="#f4b8b8" stroke-width="0.88" stroke-opacity="1.00"/><path d="M684.5 191.8 L748.1 200.2" stroke="#f80000" stroke-width="0.88" stroke-dasharray="5 2.5" stroke-dashoffset="0.0"/><path d="M748.1 200.2 L811.7 208.5" stroke="#f4b8b8" stroke-width="0.97" stroke-opacity="1.00"/><path d="M748.1 200.2 L811.7 208.5" stroke="#f80000" stroke-width="0.97" stroke-dasharray="5 2.5" stroke-dashoffset="0.0"/><path d="M811.7 208.5 L875.3 216.9" stroke="#f4b8b8" stroke-width="1.06" stroke-opacity="1.00"/><path d="M811.7 208.5 L875.3 216.9" stroke="#f80000" stroke-width="1.06" stroke-dasharray="5 2.5" stroke-dashoffset="0.0"/><path d="M875.3 216.9 L938.9 225.3" stroke="#f4b8b8" stroke-width="1.15" stroke-opacity="1.00"/><path d="M875.3 216.9 L938.9 225.3" stroke="#f80000" stroke-width="1.15" stroke-dasharray="5 2.5" stroke-dashoffset="0.0"/><path d="M953.8 227.7 L989.8 233.6" stroke="#f66464" stroke-width="1.31" stroke-opacity="1.00"/><path d="M953.8 227.7 L989.8 233.6" stroke="#fa0000" stroke-width="1.31" stroke-dasharray="7 1.5" stroke-dashoffset="0.0"/><path d="M989.8 233.6 L1025.8 239.5" stroke="#f66464" stroke-width="1.32" stroke-opacity="1.00"/><path d="M989.8 233.6 L1025.8 239.5" stroke="#fa0000" stroke-width="1.32" stroke-dasharray="7 1.5" stroke-dashoffset="0.0"/><path d="M1025.8 239.5 L1061.8 245.2" stroke="#f66464" stroke-width="1.34" stroke-opacity="1.00"/><path d="M1025.8 239.5 L1061.8 245.2" stroke="#fa0000" stroke-width="1.34" stroke-dasharray="7 1.5" stroke-dashoffset="0.0"/><path d="M1061.8 245.2 L1097.9 250.9" stroke="#f66464" stroke-width="1.36" stroke-opacity="1.00"/><path d="M1061.8 245.2 L1097.9 250.9" stroke="#fa0000" stroke-width="1.36" stroke-dasharray="7 1.5" stroke-dashoffset="0.0"/><path d="M1097.9 250.9 L1133.9 256.5" stroke="#f66464" stroke-width="1.38" stroke-opacity="1.00"/><path d="M1097.9 250.9 L1133.9 256.5" stroke="#fa0000" stroke-width="1.38" stroke-dasharray="7 1.5" stroke-dashoffset="0.0"/><path d="M1133.9 256.5 L1169.9 262.0" stroke="#f66464" stroke-width="1.39" stroke-opacity="1.00"/><path d="M1133.9 256.5 L1169.9 262.0" stroke="#fa0000" stroke-width="1.39" stroke-dasharray="7 1.5" stroke-dashoffset="0.0"/><path d="M1169.9 262.0 L1205.9 267.4" stroke="#f66464" stroke-width="1.41" stroke-opacity="1.00"/><path d="M1169.9 262.0 L1205.9 267.4" stroke="#fa0000" stroke-width="1.41" stroke-dasharray="7 1.5" stroke-dashoffset="0.0"/><path d="M1205.9 267.4 L1241.9 272.7" stroke="#f66464" stroke-width="1.43" stroke-opacity="1.00"/><path d="M1205.9 267.4 L1241.9 272.7" stroke="#fa0000" stroke-width="1.43" stroke-dasharray="7 1.5" stroke-dashoffset="0.0"/><path d="M1241.9 272.7 L1278.0 278.0" stroke="#f66464" stroke-width="1.44" stroke-opacity="1.00"/><path d="M1241.9 272.7 L1278.0 278.0" stroke="#fa0000" stroke-width="1.44" stroke-dasharray="7 1.5" stroke-dashoffset="0.0"/><path d="M1278.0 278.0 L1314.0 283.1" stroke="#f66464" stroke-width="1.46" stroke-opacity="1.00"/><path d="M1278.0 278.0 L1314.0 283.1" stroke="#fa0000" stroke-width="1.46" stroke-dasharray="7 1.5" stroke-dashoffset="0.0"/><path d="M1314.0 283.1 L1350.0 288.2" stroke="#f66464" stroke-width="1.48" stroke-opacity="1.00"/><path d="M1314.0 283.1 L1350.0 288.2" stroke="#fa0000" stroke-width="1.48" stroke-dasharray="7 1.5" stroke-dashoffset="0.0"/><path d="M1350.0 288.2 L1386.0 293.2" stroke="#f66464" stroke-width="1.49" stroke-opacity="1.00"/><path d="M1350.0 288.2 L1386.0 293.2" stroke="#fa0000" stroke-width="1.49" stroke-dasharray="7 1.5" stroke-dashoffset="0.0"/><path d="M945.3 267.7 L982.0 274.4" stroke="#f66464" stroke-width="1.31" stroke-opacity="1.00"/><path d="M945.3 267.7 L982.0 274.4" stroke="#fa0000" stroke-width="1.31" stroke-dasharray="7 1.5" stroke-dashoffset="0.0"/><path d="M982.0 274.4 L1018.8 281.0" stroke="#f66464" stroke-width="1.32" stroke-opacity="1.00"/><path d="M982.0 274.4 L1018.8 281.0" stroke="#fa0000" stroke-width="1.32" stroke-dasharray="7 1.5" stroke-dashoffset="0.0"/><path d="M1018.8 281.0 L1055.5 287.6" stroke="#f66464" stroke-width="1.34" stroke-opacity="1.00"/><path d="M1018.8 281.0 L1055.5 287.6" stroke="#fa0000" stroke-width="1.34" stroke-dasharray="7 1.5" stroke-dashoffset="0.0"/><path d="M1055.5 287.6 L1092.2 294.1" stroke="#f66464" stroke-width="1.36" stroke-opacity="1.00"/><path d="M1055.5 287.6 L1092.2 294.1" stroke="#fa0000" stroke-width="1.36" stroke-dasharray="7 1.5" stroke-dashoffset="0.0"/><path d="M1092.2 294.1 L1128.9 300.5" stroke="#f66464" stroke-width="1.38" stroke-opacity="1.00"/><path d="M1092.2 294.1 L1128.9 300.5" stroke="#fa0000" stroke-width="1.38" stroke-dasharray="7 1.5" stroke-dashoffset="0.0"/><path d="M1128.9 300.5 L1165.6 306.8" stroke="#f66464" stroke-width="1.39" stroke-opacity="1.00"/><path d="M1128.9 300.5 L1165.6 306.8" stroke="#fa0000" stroke-width="1.39" stroke-dasharray="7 1.5" stroke-dashoffset="0.0"/><path d="M1165.6 306.8 L1202.4 313.1" stroke="#f66464" stroke-width="1.41" stroke-opacity="1.00"/><path d="M1165.6 306.8 L1202.4 313.1" stroke="#fa0000" stroke-width="1.41" stroke-dasharray="7 1.5" stroke-dashoffset="0.0"/><path d="M1202.4 313.1 L1239.1 319.3" stroke="#f66464" stroke-width="1.43" stroke-opacity="1.00"/><path d="M1202.4 313.1 L1239.1 319.3" stroke="#fa0000" stroke-width="1.43" stroke-dasharray="7 1.5" stroke-dashoffset="0.0"/><path d="M1239.1 319.3 L1275.8 325.4" stroke="#f66464" stroke-width="1.44" stroke-opacity="1.00"/><path d="M1239.1 319.3 L1275.8 325.4" stroke="#fa0000" stroke-width="1.44" stroke-dasharray="7 1.5" stroke-dashoffset="0.0"/><path d="M1275.8 325.4 L1312.5 331.4" stroke="#f66464" stroke-width="1.46" stroke-opacity="1.00"/><path d="M1275.8 325.4 L1312.5 331.4" stroke="#fa0000" stroke-width="1.46" stroke-dasharray="7 1.5" stroke-dashoffset="0.0"/><path d="M1312.5 331.4 L1349.3 337.4" stroke="#f66464" stroke-width="1.48" stroke-opacity="1.00"/><path d="M1312.5 331.4 L1349.3 337.4" stroke="#fa0000" stroke-width="1.48" stroke-dasharray="7 1.5" stroke-dashoffset="0.0"/><path d="M1349.3 337.4 L1386.0 343.3" stroke="#f66464" stroke-width="1.49" stroke-opacity="1.00"/><path d="M1349.3 337.4 L1386.0 343.3" stroke="#fa0000" stroke-width="1.49" stroke-dasharray="7 1.5" stroke-dashoffset="0.0"/><path d="M560.4 245.4 L623.4 256.4" stroke="#f4ecec" stroke-width="0.59" stroke-opacity="0.90"/><path d="M560.4 245.4 L623.4 256.4" stroke="#f01010" stroke-width="0.59" stroke-dasharray="3.5 2.5" stroke-dashoffset="0.0"/><path d="M623.4 256.4 L686.3 267.4" stroke="#f4ecec" stroke-width="0.66" stroke-opacity="0.90"/><path d="M623.4 256.4 L686.3 267.4" stroke="#f01010" stroke-width="0.66" stroke-dasharray="3.5 2.5" stroke-dashoffset="0.0"/><path d="M686.3 267.4 L749.3 278.4" stroke="#f4ecec" stroke-width="0.74" stroke-opacity="0.90"/><path d="M686.3 267.4 L749.3 278.4" stroke="#f01010" stroke-width="0.74" stroke-dasharray="3.5 2.5" stroke-dashoffset="0.0"/><path d="M749.3 278.4 L812.3 289.3" stroke="#f4ecec" stroke-width="0.81" stroke-opacity="0.90"/><path d="M749.3 278.4 L812.3 289.3" stroke="#f01010" stroke-width="0.81" stroke-dasharray="3.5 2.5" stroke-dashoffset="0.0"/><path d="M812.3 289.3 L875.2 300.3" stroke="#f4ecec" stroke-width="0.89" stroke-opacity="0.90"/><path d="M812.3 289.3 L875.2 300.3" stroke="#f01010" stroke-width="0.89" stroke-dasharray="3.5 2.5" stroke-dashoffset="0.0"/><path d="M875.2 300.3 L938.2 311.3" stroke="#f4ecec" stroke-width="0.96" stroke-opacity="0.90"/><path d="M875.2 300.3 L938.2 311.3" stroke="#f01010" stroke-width="0.96" stroke-dasharray="3.5 2.5" stroke-dashoffset="0.0"/><path d="M560.4 253.9 L623.4 265.2" stroke="#f4ecec" stroke-width="0.59" stroke-opacity="0.90"/><path d="M560.4 253.9 L623.4 265.2" stroke="#f01010" stroke-width="0.59" stroke-dasharray="3.5 2.5" stroke-dashoffset="0.0"/><path d="M623.4 265.2 L686.3 276.6" stroke="#f4ecec" stroke-width="0.66" stroke-opacity="0.90"/><path d="M623.4 265.2 L686.3 276.6" stroke="#f01010" stroke-width="0.66" stroke-dasharray="3.5 2.5" stroke-dashoffset="0.0"/><path d="M686.3 276.6 L749.3 287.9" stroke="#f4ecec" stroke-width="0.74" stroke-opacity="0.90"/><path d="M686.3 276.6 L749.3 287.9" stroke="#f01010" stroke-width="0.74" stroke-dasharray="3.5 2.5" stroke-dashoffset="0.0"/><path d="M749.3 287.9 L812.3 299.3" stroke="#f4ecec" stroke-width="0.81" stroke-opacity="0.90"/><path d="M749.3 287.9 L812.3 299.3" stroke="#f01010" stroke-width="0.81" stroke-dasharray="3.5 2.5" stroke-dashoffset="0.0"/><path d="M812.3 299.3 L875.2 310.6" stroke="#f4ecec" stroke-width="0.89" stroke-opacity="0.90"/><path d="M812.3 299.3 L875.2 310.6" stroke="#f01010" stroke-width="0.89" stroke-dasharray="3.5 2.5" stroke-dashoffset="0.0"/><path d="M875.2 310.6 L938.2 322.0" stroke="#f4ecec" stroke-width="0.96" stroke-opacity="0.90"/><path d="M875.2 310.6 L938.2 322.0" stroke="#f01010" stroke-width="0.96" stroke-dasharray="3.5 2.5" stroke-dashoffset="0.0"/><path d="M946.0 312.4 L982.7 319.1" stroke="#f8f0f0" stroke-width="1.05" stroke-opacity="1.00"/><path d="M946.0 312.4 L982.7 319.1" stroke="#f01010" stroke-width="1.05" stroke-dasharray="4 2.5" stroke-dashoffset="0.0"/><path d="M982.7 319.1 L1019.3 325.7" stroke="#f8f0f0" stroke-width="1.04" stroke-opacity="1.00"/><path d="M982.7 319.1 L1019.3 325.7" stroke="#f01010" stroke-width="1.04" stroke-dasharray="4 2.5" stroke-dashoffset="0.0"/><path d="M1019.3 325.7 L1056.0 332.3" stroke="#f8f0f0" stroke-width="1.03" stroke-opacity="1.00"/><path d="M1019.3 325.7 L1056.0 332.3" stroke="#f01010" stroke-width="1.03" stroke-dasharray="4 2.5" stroke-dashoffset="0.0"/><path d="M1056.0 332.3 L1092.7 338.9" stroke="#f8f0f0" stroke-width="1.02" stroke-opacity="1.00"/><path d="M1056.0 332.3 L1092.7 338.9" stroke="#f01010" stroke-width="1.02" stroke-dasharray="4 2.5" stroke-dashoffset="0.0"/><path d="M1092.7 338.9 L1129.3 345.4" stroke="#f8f0f0" stroke-width="1.01" stroke-opacity="1.00"/><path d="M1092.7 338.9 L1129.3 345.4" stroke="#f01010" stroke-width="1.01" stroke-dasharray="4 2.5" stroke-dashoffset="0.0"/><path d="M1129.3 345.4 L1166.0 352.0" stroke="#f8f0f0" stroke-width="1.00" stroke-opacity="1.00"/><path d="M1129.3 345.4 L1166.0 352.0" stroke="#f01010" stroke-width="1.00" stroke-dasharray="4 2.5" stroke-dashoffset="0.0"/><path d="M1166.0 352.0 L1202.7 358.5" stroke="#f8f0f0" stroke-width="1.00" stroke-opacity="1.00"/><path d="M1166.0 352.0 L1202.7 358.5" stroke="#f01010" stroke-width="1.00" stroke-dasharray="4 2.5" stroke-dashoffset="0.0"/><path d="M1202.7 358.5 L1239.3 365.0" stroke="#f8f0f0" stroke-width="0.99" stroke-opacity="1.00"/><path d="M1202.7 358.5 L1239.3 365.0" stroke="#f01010" stroke-width="0.99" stroke-dasharray="4 2.5" stroke-dashoffset="0.0"/><path d="M1239.3 365.0 L1276.0 371.4" stroke="#f8f0f0" stroke-width="0.98" stroke-opacity="1.00"/><path d="M1239.3 365.0 L1276.0 371.4" stroke="#f01010" stroke-width="0.98" stroke-dasharray="4 2.5" stroke-dashoffset="0.0"/><path d="M1276.0 371.4 L1312.7 377.9" stroke="#f8f0f0" stroke-width="0.97" stroke-opacity="1.00"/><path d="M1276.0 371.4 L1312.7 377.9" stroke="#f01010" stroke-width="0.97" stroke-dasharray="4 2.5" stroke-dashoffset="0.0"/><path d="M1312.7 377.9 L1349.3 384.3" stroke="#f8f0f0" stroke-width="0.96" stroke-opacity="1.00"/><path d="M1312.7 377.9 L1349.3 384.3" stroke="#f01010" stroke-width="0.96" stroke-dasharray="4 2.5" stroke-dashoffset="0.0"/><path d="M1349.3 384.3 L1386.0 390.7" stroke="#f8f0f0" stroke-width="0.95" stroke-opacity="1.00"/><path d="M1349.3 384.3 L1386.0 390.7" stroke="#f01010" stroke-width="0.95" stroke-dasharray="4 2.5" stroke-dashoffset="0.0"/><path d="M946.0 323.5 L982.7 330.3" stroke="#f8f0f0" stroke-width="1.05" stroke-opacity="1.00"/><path d="M946.0 323.5 L982.7 330.3" stroke="#f01010" stroke-width="1.05" stroke-dasharray="4 2.5" stroke-dashoffset="0.0"/><path d="M982.7 330.3 L1019.3 337.1" stroke="#f8f0f0" stroke-width="1.04" stroke-opacity="1.00"/><path d="M982.7 330.3 L1019.3 337.1" stroke="#f01010" stroke-width="1.04" stroke-dasharray="4 2.5" stroke-dashoffset="0.0"/><path d="M1019.3 337.1 L1056.0 343.9" stroke="#f8f0f0" stroke-width="1.03" stroke-opacity="1.00"/><path d="M1019.3 337.1 L1056.0 343.9" stroke="#f01010" stroke-width="1.03" stroke-dasharray="4 2.5" stroke-dashoffset="0.0"/><path d="M1056.0 343.9 L1092.7 350.6" stroke="#f8f0f0" stroke-width="1.02" stroke-opacity="1.00"/><path d="M1056.0 343.9 L1092.7 350.6" stroke="#f01010" stroke-width="1.02" stroke-dasharray="4 2.5" stroke-dashoffset="0.0"/><path d="M1092.7 350.6 L1129.3 357.3" stroke="#f8f0f0" stroke-width="1.01" stroke-opacity="1.00"/><path d="M1092.7 350.6 L1129.3 357.3" stroke="#f01010" stroke-width="1.01" stroke-dasharray="4 2.5" stroke-dashoffset="0.0"/><path d="M1129.3 357.3 L1166.0 364.0" stroke="#f8f0f0" stroke-width="1.00" stroke-opacity="1.00"/><path d="M1129.3 357.3 L1166.0 364.0" stroke="#f01010" stroke-width="1.00" stroke-dasharray="4 2.5" stroke-dashoffset="0.0"/><path d="M1166.0 364.0 L1202.7 370.7" stroke="#f8f0f0" stroke-width="1.00" stroke-opacity="1.00"/><path d="M1166.0 364.0 L1202.7 370.7" stroke="#f01010" stroke-width="1.00" stroke-dasharray="4 2.5" stroke-dashoffset="0.0"/><path d="M1202.7 370.7 L1239.3 377.4" stroke="#f8f0f0" stroke-width="0.99" stroke-opacity="1.00"/><path d="M1202.7 370.7 L1239.3 377.4" stroke="#f01010" stroke-width="0.99" stroke-dasharray="4 2.5" stroke-dashoffset="0.0"/><path d="M1239.3 377.4 L1276.0 384.0" stroke="#f8f0f0" stroke-width="0.98" stroke-opacity="1.00"/><path d="M1239.3 377.4 L1276.0 384.0" stroke="#f01010" stroke-width="0.98" stroke-dasharray="4 2.5" stroke-dashoffset="0.0"/><path d="M1276.0 384.0 L1312.7 390.6" stroke="#f8f0f0" stroke-width="0.97" stroke-opacity="1.00"/><path d="M1276.0 384.0 L1312.7 390.6" stroke="#f01010" stroke-width="0.97" stroke-dasharray="4 2.5" stroke-dashoffset="0.0"/><path d="M1312.7 390.6 L1349.3 397.2" stroke="#f8f0f0" stroke-width="0.96" stroke-opacity="1.00"/><path d="M1312.7 390.6 L1349.3 397.2" stroke="#f01010" stroke-width="0.96" stroke-dasharray="4 2.5" stroke-dashoffset="0.0"/><path d="M1349.3 397.2 L1386.0 403.7" stroke="#f8f0f0" stroke-width="0.95" stroke-opacity="1.00"/><path d="M1349.3 397.2 L1386.0 403.7" stroke="#f01010" stroke-width="0.95" stroke-dasharray="4 2.5" stroke-dashoffset="0.0"/></g><text transform="translate(925.0 127.6) scale(0.66 1) skewX(-5)" font-family="Liberation Sans, sans-serif" font-size="10.5" fill="#20206a">50'</text><text transform="translate(925.0 214.0) scale(0.66 1) skewX(-5)" font-family="Liberation Sans, sans-serif" font-size="10.5" fill="#20206a">40'</text><text transform="translate(925.0 257.6) scale(0.66 1) skewX(-5)" font-family="Liberation Sans, sans-serif" font-size="10.5" fill="#20206a">35'</text><text transform="translate(925.0 300.7) scale(0.66 1) skewX(-5)" font-family="Liberation Sans, sans-serif" font-size="10.5" fill="#20206a">30'</text><text transform="translate(925.0 343.7) scale(0.66 1) skewX(-5)" font-family="Liberation Sans, sans-serif" font-size="10.5" fill="#20206a">25'</text><text transform="translate(925.0 386.0) scale(0.66 1) skewX(-5)" font-family="Liberation Sans, sans-serif" font-size="10.5" fill="#20206a">20'</text><text transform="translate(925.0 427.6) scale(0.66 1) skewX(-5)" font-family="Liberation Sans, sans-serif" font-size="10.5" fill="#20206a">15'</text><text transform="translate(925.0 468.8) scale(0.66 1) skewX(-5)" font-family="Liberation Sans, sans-serif" font-size="10.5" fill="#20206a">10'</text><text transform="translate(928.0 508.8) scale(0.66 1) skewX(-5)" font-family="Liberation Sans, sans-serif" font-size="10.5" fill="#20206a">5'</text><text transform="translate(999.6 389.6) scale(0.97 1)" font-family="Liberation Sans, sans-serif" font-size="11.5" fill="#2a2a6e">GCU 39° 4.00psf</text><text transform="translate(881.0 151.0) rotate(5.6)" textLength="46.2" lengthAdjust="spacingAndGlyphs" font-family="Liberation Sans, sans-serif" font-weight="bold" font-size="6.6" fill="#fff000" fill-opacity="1.00">Primary 270° 78' 0.502''</text><text transform="translate(854.0 154.0) rotate(5.8)" textLength="46.2" lengthAdjust="spacingAndGlyphs" font-family="Liberation Sans, sans-serif" font-weight="bold" font-size="6.6" fill="#fff000" fill-opacity="1.00">Primary 270° 78' 0.502''</text><text transform="translate(829.0 156.3) rotate(6.0)" textLength="46.2" lengthAdjust="spacingAndGlyphs" font-family="Liberation Sans, sans-serif" font-weight="bold" font-size="6.6" fill="#fff000" fill-opacity="1.00">Primary 270° 78' 0.502''</text><text transform="translate(1017.4 163.3) rotate(6.1)" textLength="53.1" lengthAdjust="spacingAndGlyphs" font-family="Liberation Sans, sans-serif" font-weight="bold" font-size="6.6" fill="#fff000" fill-opacity="1.00">Primary 90° 241' 0.502''</text><text transform="translate(989.0 166.5) rotate(6.4)" textLength="51.8" lengthAdjust="spacingAndGlyphs" font-family="Liberation Sans, sans-serif" font-weight="bold" font-size="6.6" fill="#fff000" fill-opacity="1.00">Primary 90° 241' 0.502''</text><text transform="translate(964.0 170.0) rotate(6.8)" textLength="50.4" lengthAdjust="spacingAndGlyphs" font-family="Liberation Sans, sans-serif" font-weight="bold" font-size="6.6" fill="#fff000" fill-opacity="1.00">Primary 90° 241' 0.502''</text><text transform="translate(856.0 220.0) rotate(7.6)" textLength="46.4" lengthAdjust="spacingAndGlyphs" font-family="Liberation Sans, sans-serif" font-weight="bold" font-size="6.6" fill="#fff000" fill-opacity="1.00">6M 270° 78' 0.242''</text><text transform="translate(990.5 236.5) rotate(9.2)" textLength="50.7" lengthAdjust="spacingAndGlyphs" font-family="Liberation Sans, sans-serif" font-weight="bold" font-size="6.6" fill="#fff000" fill-opacity="1.00">Secondary 90° 241' 0.954''</text><text transform="translate(989.0 279.0) rotate(9.9)" textLength="56.9" lengthAdjust="spacingAndGlyphs" font-family="Liberation Sans, sans-serif" font-weight="bold" font-size="6.6" fill="#fff000" fill-opacity="1.00">Neutral 90° 241' 0.954''</text><text transform="translate(862.0 300.5) rotate(10.1)" textLength="36.1" lengthAdjust="spacingAndGlyphs" font-family="Liberation Sans, sans-serif" font-weight="bold" font-size="6.6" fill="#fff000" fill-opacity="1.00">Fiber 270° 78' 0.657''</text><text transform="translate(862.0 311.0) rotate(10.1)" textLength="36.1" lengthAdjust="spacingAndGlyphs" font-family="Liberation Sans, sans-serif" font-weight="bold" font-size="6.6" fill="#fff000" fill-opacity="1.00">CATV 270° 78' 0.237''</text><text transform="translate(996.5 324.3) rotate(10.1)" textLength="41.1" lengthAdjust="spacingAndGlyphs" font-family="Liberation Sans, sans-serif" font-weight="bold" font-size="6.6" fill="#fff000" fill-opacity="1.00">Fiber 90° 241' 0.657''</text><text transform="translate(996.5 335.5) rotate(10.2)" textLength="41.2" lengthAdjust="spacingAndGlyphs" font-family="Liberation Sans, sans-serif" font-weight="bold" font-size="6.6" fill="#fff000" fill-opacity="1.00">CATV 90° 241' 0.237''</text><text transform="translate(921.0 169.5) rotate(-5.2)" textLength="47.2" lengthAdjust="spacingAndGlyphs" font-family="Liberation Sans, sans-serif" font-weight="bold" font-size="5.2" fill="#e8d000" fill-opacity="0.90">Normal 10ft 4.8in x 5.8in</text><text transform="translate(921.5 243.3) rotate(-3.0)" textLength="57.6" lengthAdjust="spacingAndGlyphs" font-family="Liberation Sans, sans-serif" font-weight="bold" font-size="5.6" fill="#b4b418" fill-opacity="1.00">Transformer 1PH-25KVA</text><text transform="translate(924.5 455.5) rotate(16.7)" textLength="20.9" lengthAdjust="spacingAndGlyphs" font-family="Liberation Sans, sans-serif" font-weight="bold" font-size="5.0" fill="#fff000" fill-opacity="1.00">Pedestal</text><text transform="translate(1047.0 518.5) rotate(9.5)" textLength="33.5" lengthAdjust="spacingAndGlyphs" font-family="Liberation Sans, sans-serif" font-weight="bold" font-size="3.6" fill="#fff000" fill-opacity="1.00">Wind 39°</text><circle cx="1013" cy="503.6" r="0.9" fill="#f4e800"/><defs><clipPath id="cbx"><rect x="501.4" y="37.4" width="120.4" height="120.2"/></clipPath></defs><g clip-path="url(#cbx)"><rect x="501" y="37" width="121" height="121" fill="#fff"/><circle cx="561.5" cy="97.6" r="60.6" fill="none" stroke="#a8d3e4" stroke-width="8.8"/><path d="M561.5 37V79 M561.5 117.5V158" stroke="#ff0000" stroke-width="1.1" fill="none"/><path d="M561.5 64L563.2 79H559.8Z M561.5 133L563.2 117.5H559.8Z" fill="#ff9090" fill-opacity="0.8"/><path d="M555.3 73.4H567.5 M555.3 121.2H567.5 M556.3 145.3H567" stroke="#9a9a9a" stroke-width="0.9" fill="none"/><path d="M501 102.3H541.7 M581.3 102.3H622" stroke="#0000ff" stroke-width="1.1" fill="none"/><path d="M526.5 97.4L541.2 94.6V100.4Z M598.8 97.4L581.6 94.6V100.4Z" fill="#ffb4ac"/><path d="M574.3 66.7 L572.4 75.6 L569.4 74.4 Z M592.4 84.8 L584.7 89.7 L583.5 86.7 Z M592.4 110.4 L583.5 108.5 L584.7 105.5 Z M574.3 128.5 L569.4 120.8 L572.4 119.6 Z M548.7 128.5 L550.6 119.6 L553.6 120.8 Z M530.6 110.4 L538.3 105.5 L539.5 108.5 Z M530.6 84.8 L539.5 86.7 L538.3 89.7 Z M548.7 66.7 L553.6 74.4 L550.6 75.6 Z" fill="#c4c4c4"/><path d="M604.1 55.0 L576.3 82.8" stroke="#d8a830" stroke-width="0.9" fill="none"/><path d="M587.7 71.4 L578.0 84.4 L574.7 81.1 Z" fill="#7468c8"/><path d="M604.1 140.2 L576.3 112.4" stroke="#d8a830" stroke-width="0.9" fill="none"/><path d="M587.7 123.8 L574.7 114.1 L578.0 110.8 Z" fill="#c8884a"/><path d="M518.9 140.2 L546.7 112.4" stroke="#d8a830" stroke-width="0.9" fill="none"/><path d="M535.3 123.8 L545.0 110.8 L548.3 114.1 Z" fill="#c8884a"/><path d="M518.9 55.0 L546.7 82.8" stroke="#d8a830" stroke-width="0.9" fill="none"/><path d="M535.3 71.4 L548.3 81.1 L545.0 84.4 Z" fill="#c8884a"/><text x="0" y="0" transform="translate(594.9 64.2) rotate(45)" text-anchor="middle" dx="0.5" dy="3.4" font-family="Liberation Sans, sans-serif" font-size="9.6" letter-spacing="1.05" fill="#b03838">000</text><text x="0" y="0" transform="translate(607.2 85.4) rotate(75)" text-anchor="middle" dx="0.5" dy="3.4" font-family="Liberation Sans, sans-serif" font-size="9.6" letter-spacing="1.05" fill="#a4a4a4">030</text><text x="0" y="0" transform="translate(607.2 109.8) rotate(105)" text-anchor="middle" dx="0.5" dy="3.4" font-family="Liberation Sans, sans-serif" font-size="9.6" letter-spacing="1.05" fill="#a4a4a4">060</text><text x="0" y="0" transform="translate(594.9 131.0) rotate(135)" text-anchor="middle" dx="0.5" dy="3.4" font-family="Liberation Sans, sans-serif" font-size="9.6" letter-spacing="1.05" fill="#b03838">090</text><text x="0" y="0" transform="translate(573.7 143.3) rotate(165)" text-anchor="middle" dx="0.5" dy="3.4" font-family="Liberation Sans, sans-serif" font-size="9.6" letter-spacing="1.05" fill="#a4a4a4">120</text><text x="0" y="0" transform="translate(549.3 143.3) rotate(195)" text-anchor="middle" dx="0.5" dy="3.4" font-family="Liberation Sans, sans-serif" font-size="9.6" letter-spacing="1.05" fill="#a4a4a4">150</text><text x="0" y="0" transform="translate(528.1 131.0) rotate(225)" text-anchor="middle" dx="0.5" dy="3.4" font-family="Liberation Sans, sans-serif" font-size="9.6" letter-spacing="1.05" fill="#b03838">180</text><text x="0" y="0" transform="translate(515.8 109.8) rotate(255)" text-anchor="middle" dx="0.5" dy="3.4" font-family="Liberation Sans, sans-serif" font-size="9.6" letter-spacing="1.05" fill="#a4a4a4">210</text><text x="0" y="0" transform="translate(515.8 85.4) rotate(285)" text-anchor="middle" dx="0.5" dy="3.4" font-family="Liberation Sans, sans-serif" font-size="9.6" letter-spacing="1.05" fill="#a4a4a4">240</text><text x="0" y="0" transform="translate(528.1 64.2) rotate(315)" text-anchor="middle" dx="0.5" dy="3.4" font-family="Liberation Sans, sans-serif" font-size="9.6" letter-spacing="1.05" fill="#b03838">270</text><rect x="541.8" y="41.6" width="40" height="22" fill="#fff" stroke="#000" stroke-width="1"/><text x="562.3" y="58.2" text-anchor="middle" font-family="Liberation Sans, sans-serif" font-size="14.2" letter-spacing="1.4" fill="#a01c1c">315</text><rect x="545" y="89" width="33" height="16" fill="#fff"/><text x="562.5" y="102" text-anchor="middle" font-family="Liberation Sans, sans-serif" font-size="14.2" letter-spacing="1.4" fill="#1c1ca8">069</text><path d="M502.3 48.6C505 47 509 46.7 511 47.5L515.6 48.2L514.4 50L511 49.4C508 49.7 505 49.5 502.3 48.6Z" fill="#000"/><path d="M509 46.2C511.5 45.3 513 44.3 514 43.2C515.5 42.7 516.8 41.6 517.6 40.8C519 40.2 520.2 41.2 519.7 42.7C518.8 43.8 517.5 44.5 516 44.9C515 45.7 513.5 46.4 512 46.6Z" fill="#000"/><path d="M509 46L514 46.3L513 48L509.5 47.6Z" fill="#777" fill-opacity="0.6"/><path d="M612 38.8L618 46.2H614.6V50.6H609.2V46.2H606Z" fill="#000"/><rect x="611" y="48.7" width="1.8" height="0.9" fill="#fff"/><path d="M514.2 152.4 C518.5 152 520 150 519.2 148.6 C518 146.2 513.5 145.5 510 145.9 C506 146.3 503.2 147.9 503.4 149.9 C503.6 151.6 506 152.8 509.5 153.1" fill="none" stroke="#000" stroke-width="1.8"/><path d="M508.9 150.7L512.5 153.3L508.9 155.1Z" fill="#000"/><circle cx="613.5" cy="146.4" r="5.6" fill="#fff" stroke="#000" stroke-width="1.3"/><path d="M610.4 146.4H616.6M613.5 143.3V149.5" stroke="#000" stroke-width="1.1"/><path d="M609.6 150.3L605.6 154.6" stroke="#000" stroke-width="3.2" stroke-linecap="round"/></g></svg></div></div><div id="vpr" class="abs"></div></body></html>
